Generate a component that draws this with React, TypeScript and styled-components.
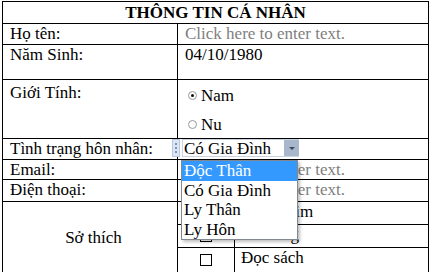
import React from "react";
import styled, { createGlobalStyle } from "styled-components";

const GlobalStyle = createGlobalStyle`
  html, body {
    margin: 0;
    padding: 0;
    background: #ffffff;
  }
  body {
    font-family: "Liberation Serif", "Times New Roman", serif;
    font-size: 17px;
    color: #000000;
  }
`;

const Page = styled.div`
  position: relative;
  padding: 1px 0 0 2px;
  width: 430px;
  height: 272px;
  box-sizing: border-box;
  overflow: hidden;
`;

const Table = styled.table`
  width: 427px;
  border-collapse: collapse;
  table-layout: fixed;
  font-family: "Liberation Serif", "Times New Roman", serif;
  font-size: 17px;
  line-height: 19px;
  color: #000000;
`;

const Cell = styled.td<{ $h?: number; $center?: boolean; $pad?: string }>`
  border: 1px solid #000000;
  padding: ${(p) => p.$pad ?? "0 0 0 7px"};
  height: ${(p) => (p.$h ? `${p.$h}px` : "auto")};
  vertical-align: ${(p) => (p.$center ? "middle" : "top")};
  text-align: ${(p) => (p.$center ? "center" : "left")};
  box-sizing: border-box;
  white-space: nowrap;
  overflow: visible;
`;

const Title = styled.td`
  border: 1px solid #000000;
  height: 22px;
  padding: 0;
  text-align: center;
  font-weight: bold;
  vertical-align: middle;
  box-sizing: border-box;
`;

const Placeholder = styled.span`
  color: #808080;
`;

const RadioList = styled.div`
  display: flex;
  flex-direction: column;
  gap: 10px;
  padding: 6px 0 0 3px;
`;

const RadioRow = styled.div`
  display: flex;
  align-items: center;
  gap: 4px;
`;

const Radio = styled.span<{ $on?: boolean }>`
  width: 9px;
  height: 9px;
  border-radius: 50%;
  border: 1px solid #9a9a9a;
  box-sizing: border-box;
  display: inline-flex;
  align-items: center;
  justify-content: center;
  background: #fdfdfd;
  &::after {
    content: "";
    width: 3px;
    height: 3px;
    border-radius: 50%;
    background: ${(p) => (p.$on ? "#111" : "transparent")};
  }
`;

const ControlWrap = styled.div`
  position: relative;
  display: inline-flex;
  margin-left: -2px;
`;

const Handle = styled.span`
  position: absolute;
  left: -10px;
  top: 0;
  width: 8px;
  height: 18px;
  background: #dbe5f3;
  border: 1px solid #b7c8e0;
  box-sizing: border-box;
  display: flex;
  flex-direction: column;
  align-items: center;
  justify-content: center;
  gap: 2px;
  & > i {
    width: 2px;
    height: 2px;
    background: #7d93b5;
  }
`;

const SelectBox = styled.div`
  display: flex;
  align-items: stretch;
  width: 117px;
  height: 18px;
  border: 1px solid #c9d3e2;
  border-right: none;
  box-sizing: border-box;
  background: #ffffff;
`;

const SelectText = styled.span`
  flex: 1;
  padding-left: 1px;
  line-height: 17px;
`;

const Arrow = styled.span`
  width: 15px;
  background: #a9b7cc;
  display: flex;
  align-items: center;
  justify-content: center;
  &::after {
    content: "";
    border-left: 3px solid transparent;
    border-right: 3px solid transparent;
    border-top: 3px solid #3c4a60;
  }
`;

const DropList = styled.ul`
  position: absolute;
  top: 21px;
  left: -1px;
  width: 117px;
  margin: 0;
  padding: 0;
  list-style: none;
  background: #ffffff;
  border: 1px solid #828790;
  box-sizing: border-box;
  box-shadow: 2px 2px 3px rgba(0, 0, 0, 0.25);
  z-index: 5;
`;

const DropItem = styled.li<{ $active?: boolean }>`
  height: 19.5px;
  line-height: 19px;
  padding-left: 2px;
  background: ${(p) => (p.$active ? "#3399ff" : "transparent")};
  color: ${(p) => (p.$active ? "#ffffff" : "#000000")};
`;

const Hobbies = styled.div`
  display: grid;
  grid-template-columns: 57px 1fr;
  grid-template-rows: 23px 23px 1fr;
  height: 100%;
`;

const HobbyBox = styled.div<{ $last?: boolean }>`
  border-right: 1px solid #000000;
  border-bottom: ${(p) => (p.$last ? "none" : "1px solid #000000")};
  display: flex;
  align-items: center;
  justify-content: center;
  &::after {
    content: "";
    width: 12px;
    height: 12px;
    border: 1px solid #000000;
    box-sizing: border-box;
  }
`;

const HobbyText = styled.div<{ $last?: boolean }>`
  border-bottom: ${(p) => (p.$last ? "none" : "1px solid #000000")};
  padding-left: 6px;
  line-height: 20px;
`;

const hobbies = ["Xem phim", "Đá bóng", "Đọc sách"];
const options = ["Độc Thân", "Có Gia Đình", "Ly Thân", "Ly Hôn"];

export default function App() {
  return (
    <Page>
      <GlobalStyle />
      <Table>
        <colgroup>
          <col style={{ width: 175 }} />
          <col />
        </colgroup>
        <tbody>
          <tr>
            <Title colSpan={2}>THÔNG TIN CÁ NHÂN</Title>
          </tr>
          <tr>
            <Cell $h={21}>Họ tên:</Cell>
            <Cell $h={21}>
              <Placeholder>Click here to enter text.</Placeholder>
            </Cell>
          </tr>
          <tr>
            <Cell $h={35}>Năm Sinh:</Cell>
            <Cell $h={35}>04/10/1980</Cell>
          </tr>
          <tr>
            <Cell $h={59} $pad="3px 0 0 7px">Giới Tính:</Cell>
            <Cell $h={59} $pad="0 0 0 7px">
              <RadioList>
                <RadioRow>
                  <Radio $on />
                  Nam
                </RadioRow>
                <RadioRow>
                  <Radio />
                  Nu
                </RadioRow>
              </RadioList>
            </Cell>
          </tr>
          <tr>
            <Cell $h={21}>Tình trạng hôn nhân:</Cell>
            <Cell $h={21} $pad="0 0 0 6px">
              <ControlWrap>
                <Handle>
                  <i />
                  <i />
                  <i />
                </Handle>
                <SelectBox>
                  <SelectText>Có Gia Đình</SelectText>
                  <Arrow />
                </SelectBox>
                <DropList>
                  {options.map((o, i) => (
                    <DropItem key={o} $active={i === 0}>
                      {o}
                    </DropItem>
                  ))}
                </DropList>
              </ControlWrap>
            </Cell>
          </tr>
          <tr>
            <Cell $h={20}>Email:</Cell>
            <Cell $h={20}>
              <Placeholder>Click here to enter text.</Placeholder>
            </Cell>
          </tr>
          <tr>
            <Cell $h={22}>Điện thoại:</Cell>
            <Cell $h={22}>
              <Placeholder>Click here to enter text.</Placeholder>
            </Cell>
          </tr>
          <tr>
            <Cell $h={71} $center>
              Sở thích
            </Cell>
            <Cell $h={71} $pad="0">
              <Hobbies>
                {hobbies.map((h, i) => (
                  <React.Fragment key={h}>
                    <HobbyBox $last={i === hobbies.length - 1} />
                    <HobbyText $last={i === hobbies.length - 1}>{h}</HobbyText>
                  </React.Fragment>
                ))}
              </Hobbies>
            </Cell>
          </tr>
        </tbody>
      </Table>
    </Page>
  );
}
